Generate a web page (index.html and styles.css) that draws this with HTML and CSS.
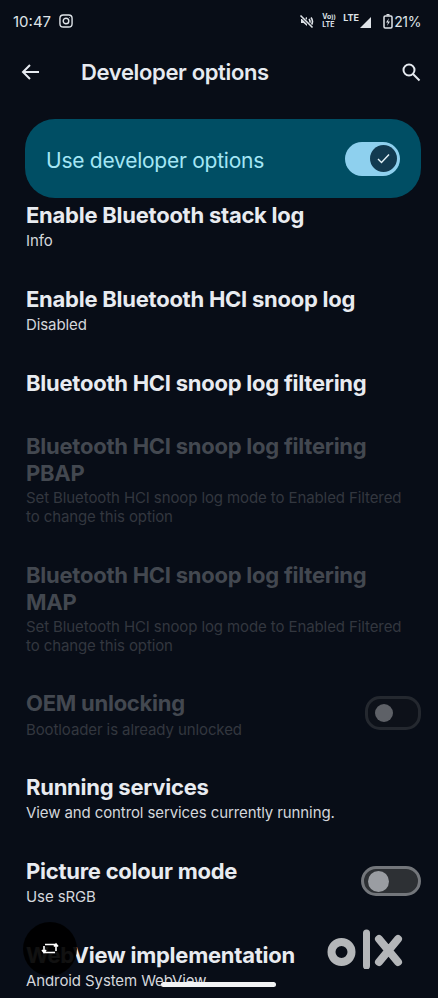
FILE: index.html
```html
<!DOCTYPE html>
<html lang="en">
<head>
    <meta charset="UTF-8">
    <meta name="viewport" content="width=device-width, initial-scale=1.0">
    <title>Developer options</title>
    <link rel="stylesheet" href="styles.css">
</head>
<body>
    <div class="screen">
        <div class="status-bar">
            <div class="status-left">
                <span class="clock">10:47</span>
                <svg class="insta" width="14" height="14" viewBox="0 0 15 15" fill="none" stroke="#dfe3e8" stroke-width="1.5">
                    <rect x="1" y="1" width="13" height="13" rx="3.6"/>
                    <circle cx="7.5" cy="7.5" r="3"/>
                    <circle cx="11.2" cy="3.8" r=".5" fill="#dfe3e8" stroke="none"/>
                </svg>
            </div>
            <div class="status-right">
                <svg class="mute" width="15" height="15" viewBox="0 0 15 15" fill="none" stroke="#dfe3e8" stroke-width="1.6">
                    <path d="M2 5v4h2.5L8 12V3L4.5 5z" fill="#dfe3e8" stroke="none"/>
                    <path d="M10 5q2 2.5 0 5M12 3.5q3 4 0 8"/>
                    <path d="M1.500 1.500l12 12" stroke="#080d17" stroke-width="3"/>
                    <path d="M1.500 1.500l12 12"/>
                </svg>
                <span class="volte"><span>Vo<small>))</small></span><span>LTE</span></span>
                <span class="lte-text">LTE</span>
                <svg class="signal" width="11" height="11" viewBox="0 0 11 11"><path d="M11 0v11H0z" fill="#dfe3e8"/></svg>
                <svg class="batt-icon" width="10" height="15" viewBox="0 0 10 15" fill="none">
                    <path d="M3.500 0h3v1.500h-3z" fill="#dfe3e8"/>
                    <rect x="1" y="2" width="8" height="12" rx="1.2" stroke="#dfe3e8" stroke-width="1.5"/>
                    <path d="M6 4L3 8.500h2L4 12l3-4.500H5z" fill="#dfe3e8"/>
                </svg>
                <span class="battery">21%</span>
            </div>
        </div>

        <div class="app-bar">
            <svg class="back" width="18" height="16" viewBox="0 0 18 16" fill="none" stroke="#e6eaf0" stroke-width="2">
                <path d="M18 8H2M9 1L2 8l7 7"/>
            </svg>
            <h1>Developer options</h1>
            <svg class="search" width="20" height="20" viewBox="0 0 20 20" fill="none" stroke="#e6eaf0" stroke-width="2">
                <circle cx="8" cy="8" r="5.500"/>
                <path d="M12 12l6.500 6.500"/>
            </svg>
        </div>

        <div class="main-switch">
            <span class="switch-label">Use developer options</span>
            <span class="toggle-on">
                <span class="knob-on">
                    <svg width="13" height="11" viewBox="0 0 13 11" fill="none" stroke="#e4f2f8" stroke-width="1.4"><path d="M1 6l3.500 3.500L12 1.500"/></svg>
                </span>
            </span>
        </div>

        <div class="list">
            <div class="row first">
                <h2>Enable Bluetooth stack log</h2>
                <p>Info</p>
            </div>
            <div class="row">
                <h2>Enable Bluetooth HCI snoop log</h2>
                <p>Disabled</p>
            </div>
            <div class="row">
                <h2>Bluetooth HCI snoop log filtering</h2>
            </div>
            <div class="row disabled">
                <h2>Bluetooth HCI snoop log filtering PBAP</h2>
                <p class="long">Set Bluetooth HCI snoop log mode to Enabled Filtered to change this option</p>
            </div>
            <div class="row disabled">
                <h2>Bluetooth HCI snoop log filtering MAP</h2>
                <p class="long">Set Bluetooth HCI snoop log mode to Enabled Filtered to change this option</p>
            </div>
            <div class="row disabled with-toggle">
                <div>
                    <h2>OEM unlocking</h2>
                    <p>Bootloader is already unlocked</p>
                </div>
                <span class="toggle-off dim"><span class="knob-off"></span></span>
            </div>
            <div class="row">
                <h2>Running services</h2>
                <p>View and control services currently running.</p>
            </div>
            <div class="row with-toggle">
                <div>
                    <h2>Picture colour mode</h2>
                    <p>Use sRGB</p>
                </div>
                <span class="toggle-off"><span class="knob-off"></span></span>
            </div>
            <div class="row">
                <h2>WebView implementation</h2>
                <p>Android System WebView</p>
            </div>
        </div>

        <div class="float-btn">
            <svg width="18" height="13" viewBox="0 0 18 13" fill="none" stroke="#fff" stroke-width="1.6">
                <path d="M4 2.500H15V9M13 4.500l2-2.500 2 2.500"/>
                <path d="M14 10.500H3V4M1 8l2 2.500L5 8"/>
            </svg>
        </div>
        <svg class="olx" width="78" height="40" viewBox="0 0 78 40" fill="none" stroke="#b4b6b9">
            <circle cx="15.500" cy="23" r="10" stroke-width="8"/>
            <path d="M40.500 4v33" stroke-width="7" stroke-linecap="round"/>
            <path d="M53 10l19 23M72 10L53 33" stroke-width="8" stroke-linecap="round"/>
        </svg>
        <div class="home-bar"></div>
    </div>
</body>
</html>
```

FILE: styles.css
```css
* {
    box-sizing: border-box;
}

html, body {
    margin: 0;
    padding: 0;
    background-color: #080d17;
}

body {
    font-family: Inter, "Noto Sans", sans-serif;
    color: #e8ebf0;
}

.screen {
    position: relative;
    width: 438px;
    height: 998px;
    overflow: hidden;
}

/* status bar */
.status-bar {
    display: flex;
    justify-content: space-between;
    align-items: center;
    height: 42px;
    padding: 0 17px 0 13px;
    color: #dfe3e8;
}

.status-left {
    display: flex;
    align-items: center;
    gap: 8px;
    font-size: 15px;
}

.status-right {
    display: flex;
    align-items: center;
}

.volte {
    display: flex;
    flex-direction: column;
    width: 14px;
    margin-left: 8px;
    font-size: 7px;
    font-weight: 700;
    line-height: 8px;
    white-space: nowrap;
}

.volte small {
    font-size: 6px;
}

.lte-text {
    width: 16px;
    margin: -7px 0 0 7px;
    font-size: 9px;
    font-weight: 700;
}

.signal {
    margin: 3px 0 0 1px;
}

.batt-icon {
    margin-left: 12px;
}

.battery {
    margin-left: 1px;
    font-size: 14px;
    letter-spacing: -.4px;
}

/* app bar */
.app-bar {
    display: flex;
    align-items: center;
    height: 60px;
    padding: 0 17px 0 21px;
}

.app-bar h1 {
    flex: 1;
    margin: 0 0 0 42px;
    font-size: 22px;
    font-weight: 600;
    letter-spacing: -.35px;
    color: #e6eaf0;
}

/* main switch */
.main-switch {
    display: flex;
    justify-content: space-between;
    align-items: center;
    height: 79px;
    margin: 17px 17px 0 25px;
    padding: 0 21px;
    border-radius: 30px;
    background-color: #004e64;
    color: #a4e6f5;
    font-size: 21px;
    letter-spacing: -.25px;
}

.switch-label {
    padding-top: 3px;
}

.toggle-on {
    display: flex;
    justify-content: flex-end;
    align-items: center;
    width: 55px;
    height: 34px;
    padding-right: 3px;
    border-radius: 17px;
    background-color: #8ed0ee;
}

.knob-on {
    display: flex;
    justify-content: center;
    align-items: center;
    width: 27px;
    height: 27px;
    border-radius: 50%;
    background-color: #123a50;
}

/* rows */
.list {
    padding: 0 17px 0 26px;
}

.row {
    padding: 17px 0 16px;
}

.row.first {
    padding-top: 4px;
}

.row h2 {
    margin: 0 0 1px;
    font-size: 22px;
    font-weight: 700;
    line-height: 26px;
    letter-spacing: -.25px;
    color: #e8ebf0;
}

.row p {
    margin: 0;
    font-size: 15px;
    line-height: 24px;
    letter-spacing: -.1px;
    color: #d4d7dc;
}

.row p.long {
    max-width: 385px;
    margin-top: 2px;
    line-height: 19px;
}

.row.disabled {
    padding: 20px 0 16px;
}

.row.disabled h2 {
    line-height: 26.5px;
    color: #434850;
}

.row.disabled p {
    color: #33373f;
}

.row.disabled.with-toggle {
    padding: 19px 0 15.5px;
}

.with-toggle {
    display: flex;
    justify-content: space-between;
    align-items: center;
}

.toggle-off {
    display: flex;
    align-items: center;
    width: 60px;
    height: 30px;
    margin-bottom: 5px;
    padding-left: 4px;
    border: 3px solid #73767b;
    border-radius: 15px;
    background-color: #2d3034;
}

.toggle-off.dim {
    width: 56px;
    height: 34px;
    padding-left: 7px;
    border-color: #24282f;
    background-color: #0d1119;
}

.knob-off {
    width: 21px;
    height: 21px;
    border-radius: 50%;
    background-color: #9a9da2;
}

.dim .knob-off {
    width: 18px;
    height: 18px;
    background-color: #5e6167;
}

/* overlays */
.float-btn {
    position: absolute;
    left: 23px;
    top: 922px;
    display: flex;
    justify-content: center;
    align-items: center;
    width: 54px;
    height: 54px;
    padding-bottom: 1px;
    border-radius: 50%;
    background-color: rgba(0, 0, 0, .93);
}

.olx {
    position: absolute;
    left: 326px;
    top: 929px;
}

.home-bar {
    position: absolute;
    left: 161px;
    top: 982px;
    width: 115px;
    height: 5px;
    border-radius: 3px;
    background-color: #f2f3f5;
}
```
